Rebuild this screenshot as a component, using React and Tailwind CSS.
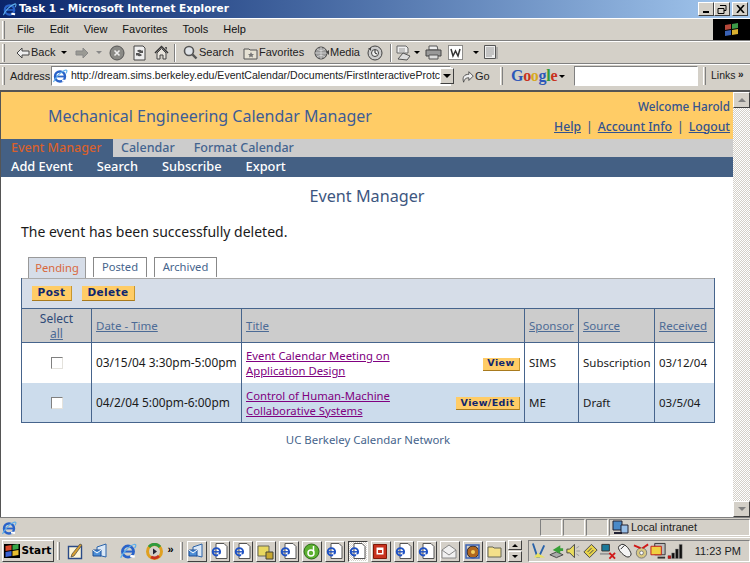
const Sep = () => <div className="h-[18px] w-[3px] shrink-0 border-l border-r border-l-white border-r-[#808080]" />;

const TitleBtn = ({ children }) => (
  <div className="flex h-[14px] w-[16px] items-center justify-center border border-t-white border-l-white border-r-[#404040] border-b-[#404040] bg-[#d4d0c8]">{children}</div>
);

const IE = ({ s = 16 }) => (
  <svg width={s} height={s} viewBox="0 0 16 16" className="shrink-0">
    <circle cx="8" cy="8.5" r="5" fill="none" stroke="#2a63c9" strokeWidth="2.4" />
    <path d="M3 8.5h10" stroke="#2a63c9" strokeWidth="1.8" />
    <path d="M10 12.5l4 .5" stroke="#fff" strokeWidth="2.2" />
    <path d="M1.5 14C3 10 9 3 14 2c1.5 0 1 2-.2 3.5" fill="none" stroke="#5fb0ec" strokeWidth="1.1" />
  </svg>
);

const Doc = () => (
  <svg width="18" height="18" viewBox="0 0 18 18" className="shrink-0">
    <path d="M5 1.5h8l3 3v12H5z" fill="#fff" stroke="#555" />
    <g transform="translate(-1 3) scale(.8)"><circle cx="8" cy="8.5" r="4.6" fill="none" stroke="#1f52c4" strokeWidth="2.4" /><path d="M3 8.5h10" stroke="#1f52c4" strokeWidth="1.8" /><path d="M10 12.5l4 .5" stroke="#fff" strokeWidth="2" /></g>
  </svg>
);

const Outlook = () => (
  <svg width="18" height="18" viewBox="0 0 18 18"><path d="M5 5l9-3v13l-9-2z" fill="#dbe8f6" stroke="#2a63a9" /><path d="M1 8h8v6H1z" fill="#4d8ed6" stroke="#1d4f98" /><path d="M1 8l4 3 4-3" fill="none" stroke="#fff" /></svg>
);

const Task = ({ active, children }) => (
  <div className={"flex h-[21px] w-[20px] shrink-0 items-center justify-center border " + (active ? "border-t-[#404040] border-l-[#404040] border-r-white border-b-white bg-[repeating-conic-gradient(#fff_0_25%,#d4d0c8_0_50%)] bg-[length:2px_2px]" : "border-t-white border-l-white border-r-[#404040] border-b-[#404040] bg-[#d4d0c8]")}>{children}</div>
);

const Btn = ({ children, w }) => (
  <span className={"inline-flex h-[15px] items-center justify-center border-r border-b border-r-[#c8962e] border-b-[#a87a1e] bg-[#ffcc66] font-['DejaVu_Sans'] text-[10.5px] font-bold tracking-[0.4px] text-[#10266e] " + w}>{children}</span>
);

const Check = () => <span className="block h-[12px] w-[12px] border border-t-[#808080] border-l-[#808080] border-r-[#e4e2dc] border-b-[#e4e2dc] bg-white" />;

const HeadLink = ({ children }) => <span className="text-[#4c6b96] underline">{children}</span>;
const cell = "flex items-center border-r border-[#46648c] pl-[4px]";
const cols = "grid-cols-[70px_150px_283px_54px_76px_60px]";

const trayIcons = [
  <svg key="1" width="18" height="18" viewBox="0 0 18 18"><path d="M2 1l5 15M14 3L8 16" stroke="#2a63a9" strokeWidth="2" fill="none" /><path d="M3 16l4-5 8 5z" fill="#e8e060" /></svg>,
  <svg key="2" width="18" height="18" viewBox="0 0 18 18"><path d="M2 13l7-3 7 3-7 3z" fill="#aaa" stroke="#444" /><path d="M5 8l8-5v3h3v3h-3v3z" fill="#38a038" /></svg>,
  <svg key="3" width="18" height="18" viewBox="0 0 18 18"><path d="M2 7h3l5-5v14l-5-5H2z" fill="#eadc5c" stroke="#444" /><path d="M12 6l3-2M12 9h4M12 12l3 2" stroke="#999" /></svg>,
  <svg key="4" width="18" height="18" viewBox="0 0 18 18"><path d="M2 10l8-8 6 6-8 8z" fill="#e6d24a" stroke="#444" /><path d="M6 10l4-4M8 12l4-4" stroke="#444" /></svg>,
  <svg key="5" width="18" height="18" viewBox="0 0 18 18"><path d="M3 2h8v7H3z" fill="#1c7a9a" stroke="#333" /><path d="M1 11h11v2H1z" fill="#999" /><path d="M11 11l6 6M17 11l-6 6" stroke="#d01818" strokeWidth="2" /></svg>,
  <svg key="6" width="18" height="18" viewBox="0 0 18 18"><path d="M6 2c4-1 9 6 10 10 0 3-3 4-5 3C7 13 1 7 3 4z" fill="#f4f4f4" stroke="#222" /><path d="M5 7l4-4" stroke="#222" /></svg>,
  <svg key="7" width="18" height="18" viewBox="0 0 18 18"><circle cx="9" cy="11" r="5.5" fill="#d8c880" stroke="#777" /><circle cx="9" cy="11" r="2" fill="#fff" stroke="#777" /><path d="M1 3l7 3M16 2l-6 4" stroke="#d01818" strokeWidth="2" /></svg>,
  <svg key="8" width="18" height="18" viewBox="0 0 18 18"><path d="M5 1h11v12H5z" fill="#bbb" stroke="#333" /><path d="M1 4h11v9H1z" fill="#f0d040" stroke="#c01818" /><path d="M8 16h8" stroke="#333" strokeWidth="2" /></svg>,
  <svg key="9" width="18" height="18" viewBox="0 0 18 18"><path d="M1 17v-3h3v3zM5 17v-6h3v6zM9 17V7h3v10zM13 17V2h3v15z" fill="#111" stroke="#777" strokeWidth=".5" /><path d="M1 14h3v3H1z" fill="#c01818" /></svg>,
];

export default function App() {
  return (
    <div className="flex h-[563px] w-[750px] flex-col overflow-hidden bg-[#d4d0c8] font-['Liberation_Sans',sans-serif] text-[11px] text-black">
      {/* title bar */}
      <div className="flex h-[18px] shrink-0 items-center bg-gradient-to-r from-[#0a246a] to-[#a6caf0] pr-[2px] pl-[2px]">
        <IE s={15} />
        <span className="ml-[2px] flex-1 font-['DejaVu_Sans'] text-[10.5px] font-bold text-white">Task 1 - Microsoft Internet Explorer</span>
        <TitleBtn><span className="mt-[6px] block h-[2px] w-[6px] bg-black" /></TitleBtn>
        <TitleBtn>
          <svg width="10" height="9" viewBox="0 0 10 9"><path d="M3 .5h6v5H7M1 3.5h6v5H1z M1 3.5h6M3 .5h6" fill="none" stroke="#000" /></svg>
        </TitleBtn>
        <div className="ml-[2px]"><TitleBtn>
          <svg width="9" height="8" viewBox="0 0 9 8"><path d="M1 0l7 8M8 0L1 8" stroke="#000" strokeWidth="1.6" /></svg>
        </TitleBtn></div>
      </div>
      {/* menu bar */}
      <div className="flex h-[23px] shrink-0 items-center border-t border-b border-t-white border-b-[#808080]">
        <div className="ml-[2px]"><Sep /></div>
        <div className="ml-[12px] flex flex-1 gap-[15px] text-[#111]">
          <span>File</span><span>Edit</span><span>View</span><span>Favorites</span><span>Tools</span><span>Help</span>
        </div>
        <div className="flex h-[21px] w-[37px] items-center justify-center bg-black">
          <svg width="15" height="14" viewBox="0 0 15 14"><path d="M1 2l6-1v5l-6 1z" fill="#b5483a" /><path d="M8 1l6-1v5l-6 1z" fill="#3c9a48" /><path d="M1 8l6-1v5l-6 1z" fill="#3a62b5" /><path d="M8 7l6-1v5l-6 1z" fill="#d8b030" /></svg>
        </div>
      </div>
      {/* toolbar */}
      <div className="flex h-[23px] shrink-0 items-center border-b border-b-[#808080] border-t border-t-white">
        <div className="ml-[2px]"><Sep /></div>
        <svg className="ml-[11px]" width="14" height="12" viewBox="0 0 14 12"><path d="M6 1L1 6l5 5V8h7V4H6z" fill="#eee" stroke="#444" /></svg>
        <span className="ml-[1px] w-[22px] text-[#222]">Back</span>
        <span className="ml-[8px] h-0 w-0 border-x-[3px] border-t-[3px] border-x-transparent border-t-black" />
        <svg className="ml-[8px]" width="14" height="12" viewBox="0 0 14 12"><path d="M8 1l5 5-5 5V8H1V4h7z" fill="#9a9a94" stroke="#888" /></svg>
        <span className="ml-[7px] h-0 w-0 border-x-[3px] border-t-[3px] border-x-transparent border-t-[#888]" />
        <svg className="ml-[7px]" width="16" height="16" viewBox="0 0 16 16"><circle cx="8" cy="8" r="7" fill="#8a8a86" stroke="#555" /><path d="M5.5 5.5l5 5M10.5 5.5l-5 5" stroke="#eee" strokeWidth="1.6" /></svg>
        <svg className="ml-[7px]" width="15" height="16" viewBox="0 0 15 16"><path d="M2 1h9l2 2v12H2z" fill="#eee" stroke="#444" /><path d="M5 6a3 3 0 0 1 5 0l1-1v3H8zM10 10a3 3 0 0 1-5 0l-1 1V8h3z" fill="#555" /></svg>
        <svg className="ml-[7px]" width="15" height="15" viewBox="0 0 15 15"><path d="M1 8l6.500-6.500L14 8" fill="none" stroke="#333" strokeWidth="1.5" /><path d="M3 8v6h3v-4h3v4h3V8l-4.500-4.500z" fill="#e8e4dc" stroke="#444" /><path d="M11 2h2v3l-2-2z" fill="#555" /></svg>
        <div className="ml-[5px] h-[18px] w-px bg-[#808080] shadow-[1px_0_0_#fff]" />
        <svg className="ml-[8px]" width="15" height="15" viewBox="0 0 15 15"><circle cx="6" cy="6" r="4.5" fill="#dfe3e8" stroke="#555" strokeWidth="1.6" /><path d="M9.500 9.500l4 4" stroke="#555" strokeWidth="2.4" /></svg>
        <span className="ml-[1px] w-[32px] text-[#222]">Search</span>
        <svg className="ml-[12px]" width="15" height="14" viewBox="0 0 15 14"><path d="M1 3h5l1 1h7v9H1z" fill="#e6e2d4" stroke="#555" /><path d="M8 6l1 2h2l-1.500 1.500.5 2-2-1-2 1 .5-2L5 8h2z" fill="#777" /></svg>
        <span className="ml-[1px] w-[43px] text-[#222]">Favorites</span>
        <svg className="ml-[12px]" width="16" height="16" viewBox="0 0 16 16"><circle cx="7" cy="8" r="6" fill="#999" stroke="#444" /><path d="M1 8h12M7 2v12M3 4c3 2 5 2 8 0M3 12c3-2 5-2 8 0" stroke="#ddd" fill="none" strokeWidth=".8" /><path d="M12 7l3-2v5z" fill="#444" /></svg>
        <span className="w-[28px] text-[#222]">Media</span>
        <svg className="ml-[9px]" width="16" height="16" viewBox="0 0 16 16"><circle cx="8" cy="8" r="7" fill="#ccc" stroke="#444" /><circle cx="8" cy="8" r="3.500" fill="#eee" stroke="#444" /><path d="M8 8V5M8 8l2 1" stroke="#222" /><path d="M1 3l3 0 0 3z" fill="#444" /></svg>
        <div className="ml-[7px] h-[18px] w-px bg-[#808080] shadow-[1px_0_0_#fff]" />
        <svg className="ml-[5px]" width="17" height="16" viewBox="0 0 17 16"><path d="M1 1h9l2 2v5H1z" fill="#eee" stroke="#666" /><path d="M3 4h6M3 6h6" stroke="#999" /><path d="M2 14l5-6 7 3-3 4z" fill="#ddd" stroke="#555" /></svg>
        <span className="ml-[1px] h-0 w-0 border-x-[3px] border-t-[3px] border-x-transparent border-t-black" />
        <svg className="ml-[5px]" width="17" height="15" viewBox="0 0 17 15"><path d="M4 1h8l1 4H4z" fill="#eee" stroke="#555" /><path d="M1 5h15v6H1z" fill="#999" stroke="#444" /><path d="M4 10h9v4H4z" fill="#ddd" stroke="#555" /></svg>
        <svg className="ml-[6px]" width="15" height="15" viewBox="0 0 15 15"><path d="M.5.500h14v14H.5z" fill="#fff" stroke="#333" strokeDasharray="1 1" /><path d="M3 4l2 7 2.500-5 2.500 5 2-7" fill="none" stroke="#333" strokeWidth="1.500" /></svg>
        <span className="ml-[10px] h-0 w-0 border-x-[3px] border-t-[3px] border-x-transparent border-t-black" />
        <svg className="ml-[4px]" width="15" height="15" viewBox="0 0 15 15"><path d="M1.500.500h11v13h-11z" fill="#eee" stroke="#555" /><path d="M3 3h8M3 5h8M3 7h8M3 9h8M3 11h6" stroke="#999" /><path d="M14 2v12" stroke="#888" /></svg>
      </div>
      {/* address bar */}
      <div className="flex h-[26px] shrink-0 items-center border-t border-t-white pb-[3px]">
        <div className="ml-[2px]"><Sep /></div>
        <span className="ml-[5px] w-[36px] text-[#222]">Address</span>
        <div className="ml-[5px] flex h-[20px] w-[400px] shrink-0 items-center border border-t-[#808080] border-l-[#808080] border-r-white border-b-white bg-white">
          <IE s={16} />
          <span className="ml-[3px] text-[10.55px] whitespace-nowrap text-[#222]">http://dream.sims.berkeley.edu/EventCalendar/Documents/FirstInteractiveProtc</span>
          <div className="ml-auto flex h-[16px] w-[14px] shrink-0 items-center justify-center border border-t-white border-l-white border-r-[#404040] border-b-[#404040] bg-[#d4d0c8]">
            <span className="h-0 w-0 border-x-[4px] border-t-[4px] border-x-transparent border-t-black" />
          </div>
        </div>
        <svg className="ml-[10px]" width="14" height="15" viewBox="0 0 16 15"><path d="M3 14C1 8 4 5 9 5V2l5 5-5 5V9C6 9 4 10 3 14z" fill="#eee" stroke="#444" /></svg>
        <span className="w-[13px] text-[#222]">Go</span>
        <div className="ml-[12px]"><Sep /></div>
        <span className="ml-[8px] w-[45px] font-['Liberation_Serif'] text-[16px] leading-none font-bold tracking-[-0.3px]">
          <span className="text-[#2d57b8]">G</span><span className="text-[#c8321e]">o</span><span className="text-[#d8a81e]">o</span><span className="text-[#2d57b8]">g</span><span className="text-[#2f9a3e]">l</span><span className="text-[#c8321e]">e</span>
        </span>
        <span className="ml-[3px] h-0 w-0 border-x-[3px] border-t-[3px] border-x-transparent border-t-black" />
        <div className="ml-[9px] h-[20px] w-[124px] border border-t-[#808080] border-l-[#808080] border-r-white border-b-white bg-white" />
        <div className="ml-[5px]"><Sep /></div>
        <span className="ml-[5px] w-[23px] text-[10.5px] text-[#222]">Links</span>
        <span className="ml-[4px] -mt-[4px] text-[10px] font-bold text-[#222]">»</span>
      </div>
      {/* page + scrollbar */}
      <div className="flex h-[427px] shrink-0 border-t-2 border-l border-t-[#555] border-l-[#555] bg-white">
        <div className="flex w-[732px] flex-col font-['Noto_Sans','Liberation_Sans',sans-serif]">
          <div className="flex h-[47px] shrink-0 items-center justify-between bg-[#ffcc66] pr-[3px] pl-[47px]">
            <span className="mt-[1px] text-[16px] text-[#3d5c96]">Mechanical Engineering Calendar Manager</span>
            <div className="mt-[3px] flex flex-col items-end gap-[2px] font-medium text-[#33538f]">
              <span className="text-[11.7px]">Welcome Harold</span>
              <div className="flex gap-[5px] text-[12.2px]"><span className="underline">Help</span><span>|</span><span className="underline">Account Info</span><span>|</span><span className="underline">Logout</span></div>
            </div>
          </div>
          <div className="flex h-[18px] shrink-0 items-center bg-[#cccccc] text-[12.5px] font-medium text-[#44648f]">
            <span className="flex h-full w-[112px] items-center bg-[#446084] pl-[10px] text-[#d9602c]">Event Manager</span>
            <span className="ml-[8px]">Calendar</span>
            <span className="ml-[19px]">Format Calendar</span>
          </div>
          <div className="flex h-[20px] shrink-0 items-center gap-[24px] bg-[#446084] pl-[10px] text-[12.8px] font-medium text-white">
            <span>Add Event</span><span>Search</span><span>Subscribe</span><span>Export</span>
          </div>
          <div className="mt-[8px] text-center text-[16.2px] leading-[22px] text-[#3d5680]">Event Manager</div>
          <div className="mt-[15px] ml-[20px] text-[14px] leading-[20px] text-[#1a1a1a]">The event has been successfully deleted.</div>
          {/* tabs */}
          <div className="relative z-10 mt-[15px] ml-[27px] flex h-[21px] gap-[7px] text-[11.2px]">
            <span className="flex h-[21px] w-[58px] items-center justify-center border border-b-0 border-[#999] bg-[#d6dde8] text-[#d9683c]">Pending</span>
            <span className="flex h-[20px] w-[54px] items-center justify-center border border-b-0 border-[#888] text-[#46648c]">Posted</span>
            <span className="flex h-[20px] w-[63px] items-center justify-center border border-b-0 border-[#888] text-[#46648c]">Archived</span>
          </div>
          {/* panel */}
          <div className="ml-[20px] w-[694px] border-l border-r border-b border-[#46648c] text-[11.5px]">
            <div className="flex h-[30px] items-center gap-[10px] border-t border-t-[#aaa] bg-[#d6dde8] pl-[10px]">
              <Btn w="w-[40px]">Post</Btn><Btn w="w-[53px]">Delete</Btn>
            </div>
            <div className={"grid h-[35px] border-t border-b border-[#46648c] bg-[#cccccc] " + cols}>
              <div className="flex flex-col items-center justify-center border-r border-[#46648c] text-[12px] leading-[15px] text-[#2e4a78]"><span>Select</span><span className="text-[#4c6b96] underline">all</span></div>
              <div className={cell}><HeadLink>Date - Time</HeadLink></div>
              <div className={cell}><HeadLink>Title</HeadLink></div>
              <div className={cell}><HeadLink>Sponsor</HeadLink></div>
              <div className={cell}><HeadLink>Source</HeadLink></div>
              <div className="flex items-center pl-[4px]"><HeadLink>Received</HeadLink></div>
            </div>
            <div className={"grid h-[40px] bg-white text-[#1a1a1a] " + cols}>
              <div className="flex items-center justify-center border-r border-[#46648c]"><Check /></div>
              <div className={cell + " text-[11.9px]"}>03/15/04 3:30pm-5:00pm</div>
              <div className="flex items-center justify-between border-r border-[#46648c] pr-[4px] pl-[4px]">
                <span className="text-[11.3px] leading-[15px] text-[#800080] underline">Event Calendar Meeting on<br />Application Design</span>
                <Btn w="mt-[2px] w-[37px] !h-[13px] !text-[9.5px]">View</Btn>
              </div>
              <div className={cell}>SIMS</div>
              <div className={cell}>Subscription</div>
              <div className="flex items-center pl-[4px]">03/12/04</div>
            </div>
            <div className={"grid h-[39px] bg-[#ccdcec] text-[#1a1a1a] " + cols}>
              <div className="flex items-center justify-center border-r border-[#46648c]"><Check /></div>
              <div className={cell + " text-[11.9px]"}>04/2/04 5:00pm-6:00pm</div>
              <div className="flex items-center justify-between border-r border-[#46648c] pr-[4px] pl-[4px]">
                <span className="text-[11.3px] leading-[15px] text-[#800080] underline">Control of Human-Machine<br />Collaborative Systems</span>
                <Btn w="mt-[2px] w-[64px] !h-[13px] !text-[9.5px]">View/Edit</Btn>
              </div>
              <div className={cell}>ME</div>
              <div className={cell}>Draft</div>
              <div className="flex items-center pl-[4px]">03/5/04</div>
            </div>
          </div>
          <div className="mt-[9px] ml-[20px] w-[694px] text-center text-[11.4px] leading-[16px] text-[#46648c]">UC Berkeley Calendar Network</div>
        </div>
        {/* scrollbar */}
        <div className="flex w-[17px] flex-col justify-between bg-[repeating-conic-gradient(#fff_0_25%,#d4d0c8_0_50%)] bg-[length:2px_2px]">
          <div className="flex h-[16px] items-center justify-center border border-t-white border-l-white border-r-[#404040] border-b-[#404040] bg-[#d4d0c8]"><span className="h-0 w-0 border-x-[4px] border-b-[4px] border-x-transparent border-b-[#808080]" /></div>
          <div className="flex h-[16px] items-center justify-center border border-t-white border-l-white border-r-[#404040] border-b-[#404040] bg-[#d4d0c8]"><span className="h-0 w-0 border-x-[4px] border-t-[4px] border-x-transparent border-t-[#808080]" /></div>
        </div>
      </div>
      {/* status bar */}
      <div className="flex h-[20px] shrink-0 items-center border-t border-t-[#808080]">
        <div className="flex h-full w-[540px] items-center pl-[1px]"><IE s={16} /></div>
        <div className="h-[17px] w-[22px] border border-t-[#808080] border-l-[#808080] border-r-white border-b-white" />
        <div className="ml-[1px] h-[17px] w-[22px] border border-t-[#808080] border-l-[#808080] border-r-white border-b-white" />
        <div className="ml-[1px] h-[17px] w-[22px] border border-t-[#808080] border-l-[#808080] border-r-white border-b-white" />
        <div className="ml-[1px] flex h-[17px] flex-1 items-center gap-[2px] border border-t-[#808080] border-l-[#808080] border-r-white border-b-white pl-[2px] text-[#222]">
          <svg width="17" height="15" viewBox="0 0 17 15"><path d="M1 1h9v9H1z" fill="#4a8ac8" stroke="#223" /><path d="M9 5h7v8H9z" fill="#9ac0e8" stroke="#223" /><path d="M2 13h8" stroke="#223" strokeWidth="2" /></svg>
          <span>Local intranet</span>
        </div>
      </div>
      {/* taskbar */}
      <div className="flex h-[26px] shrink-0 items-center border-t border-t-white pl-[2px] pt-[1px]">
        <div className="flex h-[22px] w-[52px] items-center justify-center gap-[1px] border border-t-white border-l-white border-r-[#404040] border-b-[#404040] font-['DejaVu_Sans'] text-[10.5px] font-bold">
          <svg width="16" height="14" viewBox="0 0 15 14" className="bg-black"><path d="M1 2l6-1v5l-6 1z" fill="#d8482a" /><path d="M8 1l6-1v5l-6 1z" fill="#38a848" /><path d="M1 8l6-1v5l-6 1z" fill="#3a62d5" /><path d="M8 7l6-1v5l-6 1z" fill="#e8c030" /></svg>
          Start
        </div>
        <div className="ml-[3px]"><Sep /></div>
        <div className="ml-[7px] flex w-[96px] items-center justify-between">
          <svg width="17" height="17" viewBox="0 0 17 17"><path d="M1.500 3.500h13v12h-13z" fill="#fdf6d8" stroke="#2a4a88" strokeWidth="1.400" /><path d="M5 11L13 1l2 1-8 11-3 1z" fill="#d8a030" stroke="#444" strokeWidth=".7" /></svg>
          <Outlook />
          <IE s={18} />
          <svg width="17" height="17" viewBox="0 0 17 17"><circle cx="8.500" cy="8.500" r="7" fill="none" stroke="#e0a020" strokeWidth="3" /><path d="M3 4a7 7 0 0 1 11 0" fill="none" stroke="#2f9a3e" strokeWidth="3" /><path d="M13 13a7 7 0 0 1-8 1" fill="none" stroke="#c8321e" strokeWidth="3" /><path d="M7 5.500l4 3-4 3z" fill="#223" /></svg>
        </div>
        <span className="ml-[5px] -mt-[3px] text-[11px] font-bold">»</span>
        <div className="ml-[6px]"><Sep /></div>
        <div className="ml-[4px] flex gap-[3px]">
          <Task><Outlook /></Task>
          <Task><Doc /></Task>
          <Task><Doc /></Task>
          <Task><svg width="17" height="17" viewBox="0 0 17 17"><path d="M1 3h11v10H1z" fill="#e8d860" stroke="#665" /><path d="M9 9h7v7H9z" fill="#c8a830" stroke="#443" /></svg></Task>
          <Task><Doc /></Task>
          <Task><svg width="17" height="17" viewBox="0 0 17 17"><circle cx="8.500" cy="8.500" r="7.500" fill="#5cb030" stroke="#2a6a18" /><circle cx="8" cy="10" r="3" fill="none" stroke="#fff" strokeWidth="1.500" /><path d="M10.500 3v6" stroke="#fff" strokeWidth="1.500" /></svg></Task>
          <Task><Doc /></Task>
          <Task active><Doc /></Task>
          <Task><svg width="17" height="17" viewBox="0 0 17 17"><path d="M1.500 1.500h13v14h-13z" fill="#c8321e" stroke="#801808" /><path d="M4.500 4.500h7v7h-7z" fill="#fff" /><path d="M6 7h4v3H6z" fill="#c8321e" /></svg></Task>
          <Task><Doc /></Task>
          <Task><Doc /></Task>
          <Task><svg width="17" height="15" viewBox="0 0 17 15"><path d="M1 6l7-5 7 5v8H1z" fill="#f0f0f0" stroke="#888" /><path d="M1 6l7 5 7-5" fill="none" stroke="#888" /></svg></Task>
          <Task><svg width="17" height="17" viewBox="0 0 17 17"><circle cx="9" cy="9" r="6" fill="#b06820" stroke="#223" /><path d="M2 2h13v13H2z" fill="none" stroke="#3a62b5" strokeWidth="1.500" /><circle cx="9" cy="9" r="2" fill="#f4d060" /></svg></Task>
          <Task><svg width="17" height="15" viewBox="0 0 17 15"><path d="M1 3h5l1 1h7v9H1z" fill="#f4e08a" stroke="#665" /></svg></Task>
        </div>
        <div className="ml-[2px] flex flex-col">
          <div className="flex h-[10px] w-[14px] items-center justify-center border border-t-white border-l-white border-r-[#404040] border-b-[#404040]"><span className="h-0 w-0 border-x-[3px] border-b-[3px] border-x-transparent border-b-black" /></div>
          <div className="mt-[1px] flex h-[11px] w-[14px] items-center justify-center border border-t-white border-l-white border-r-[#404040] border-b-[#404040]"><span className="h-0 w-0 border-x-[3px] border-t-[3px] border-x-transparent border-t-black" /></div>
        </div>
        <div className="ml-[6px] flex h-[22px] w-[223px] items-center border border-t-[#808080] border-l-[#808080] border-r-white border-b-white pl-[2px]">
          <div className="flex w-[153px] items-center justify-between">{trayIcons}</div>
          <span className="ml-[11px] text-[11px] whitespace-nowrap text-[#222]">11:23 PM</span>
        </div>
      </div>
    </div>
  );
}
